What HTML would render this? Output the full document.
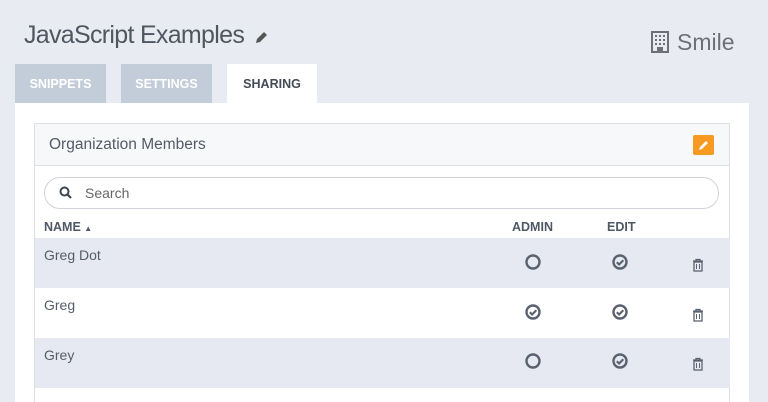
<!DOCTYPE html>
<html><head><meta charset="utf-8"><style>
*{margin:0;padding:0;box-sizing:border-box}
body{width:768px;height:402px;overflow:hidden;background:#e8ebf2;font-family:"Liberation Sans",sans-serif;position:relative}
.title{position:absolute;left:24px;top:21px;font-size:25px;letter-spacing:-0.7px;color:#505660}
.smile{position:absolute;left:677px;top:29px;font-size:23px;color:#6d7075}
.tab{position:absolute;top:64px;height:39px;width:91px;background:#c3ccd9;color:#fff;font-size:12.5px;font-weight:bold;text-align:center;line-height:40px}
.panel{position:absolute;left:15px;top:103px;width:734px;height:299px;background:#fff}
.card{position:absolute;left:34px;top:123px;width:696px;height:279px;border:1px solid #dcdfe4;border-bottom:none;background:#fff}
.head{height:42px;background:#f7f8fa;border-bottom:1px solid #dcdfe4;font-size:15.5px;color:#555b66;padding-left:14px;line-height:42px;position:relative}
.edit{position:absolute;right:15px;top:11px;width:21px;height:20px;background:#f79a22;border-radius:2px}
.search{position:absolute;left:9px;top:53px;width:675px;height:32px;border:1px solid #cfd3d9;border-radius:16px;font-size:14px;color:#666;line-height:30px;padding-left:40px}
.th{position:absolute;top:96px;font-size:12.5px;font-weight:bold;color:#505866}
.row{position:absolute;left:0;width:695px;height:50px;font-size:14px;color:#555d6b;padding:9px 0 0 9px}
.sh{background:#e6e9f1}
svg{position:absolute}
</style></head><body>
<div class="title">JavaScript Examples</div>
<svg style="left:254px;top:31px" width="14" height="14" viewBox="0 0 14 14"><path d="M2 12l1-4 7-7 3 3-7 7z" fill="#555"/></svg>
<svg style="left:651px;top:31px" width="18" height="22" viewBox="0 0 18 22"><rect x="1" y="1" width="16" height="20" fill="none" stroke="#6d7075" stroke-width="2"/><g fill="#6d7075"><rect x="4" y="4" width="2" height="2"/><rect x="8" y="4" width="2" height="2"/><rect x="12" y="4" width="2" height="2"/><rect x="4" y="8" width="2" height="2"/><rect x="8" y="8" width="2" height="2"/><rect x="12" y="8" width="2" height="2"/><rect x="4" y="12" width="2" height="2"/><rect x="8" y="12" width="2" height="2"/><rect x="12" y="12" width="2" height="2"/><rect x="6" y="16" width="6" height="5"/></g></svg>
<div class="smile">Smile</div>
<div class="tab" style="left:15px">SNIPPETS</div>
<div class="tab" style="left:121px">SETTINGS</div>
<div class="tab" style="left:227px;width:90px;background:#fff;color:#444a55">SHARING</div>
<div class="panel"></div>
<div class="card">
<div class="head">Organization Members<div class="edit"><svg style="left:5px;top:4px" width="12" height="12" viewBox="0 0 12 12"><path d="M1 11l1-3 6-6 2 2-6 6z" fill="#fff"/></svg></div></div>
<div class="search"><svg style="left:14px;top:8px" width="13" height="13" viewBox="0 0 13 13"><circle cx="5.5" cy="5.5" r="4" fill="none" stroke="#3e4654" stroke-width="2"/><path d="M8.5 8.5l3.5 3.5" stroke="#3e4654" stroke-width="2.2"/></svg>Search</div>
<div class="th" style="left:9px">NAME <span style="font-size:8px">&#9650;</span></div>
<div class="th" style="left:477px">ADMIN</div>
<div class="th" style="left:572px">EDIT</div>
<div class="row sh" style="top:114px">Greg Dot</div>
<div class="row" style="top:164px">Greg</div>
<div class="row sh" style="top:214px">Grey</div>
</div>
<svg width="0" height="0"><defs>
<g id="o"><circle cx="9" cy="9" r="6.5" fill="none" stroke="#5a6270" stroke-width="2.4"/></g>
<g id="c"><circle cx="9" cy="9" r="6.5" fill="none" stroke="#5a6270" stroke-width="2.4"/><path d="M5.8 9.2l2.3 2.3 4.2-4.2" fill="none" stroke="#5a6270" stroke-width="2.1"/></g>
<g id="t"><path d="M2 3h10M5 3V1.5h4V3" stroke="#5a6270" stroke-width="1.3" fill="none"/><rect x="3" y="4" width="8" height="9" fill="none" stroke="#5a6270" stroke-width="1.3"/><path d="M5.5 6v5M8.5 6v5" stroke="#5a6270" stroke-width="1"/></g>
</defs></svg>
<svg style="left:524px;top:253px" width="18" height="18"><use href="#o"/></svg>
<svg style="left:611px;top:253px" width="18" height="18"><use href="#c"/></svg>
<svg style="left:691px;top:258px" width="14" height="14"><use href="#t"/></svg>
<svg style="left:524px;top:303px" width="18" height="18"><use href="#c"/></svg>
<svg style="left:611px;top:303px" width="18" height="18"><use href="#c"/></svg>
<svg style="left:691px;top:308px" width="14" height="14"><use href="#t"/></svg>
<svg style="left:524px;top:352px" width="18" height="18"><use href="#o"/></svg>
<svg style="left:611px;top:352px" width="18" height="18"><use href="#c"/></svg>
<svg style="left:691px;top:357px" width="14" height="14"><use href="#t"/></svg>
</body></html>
